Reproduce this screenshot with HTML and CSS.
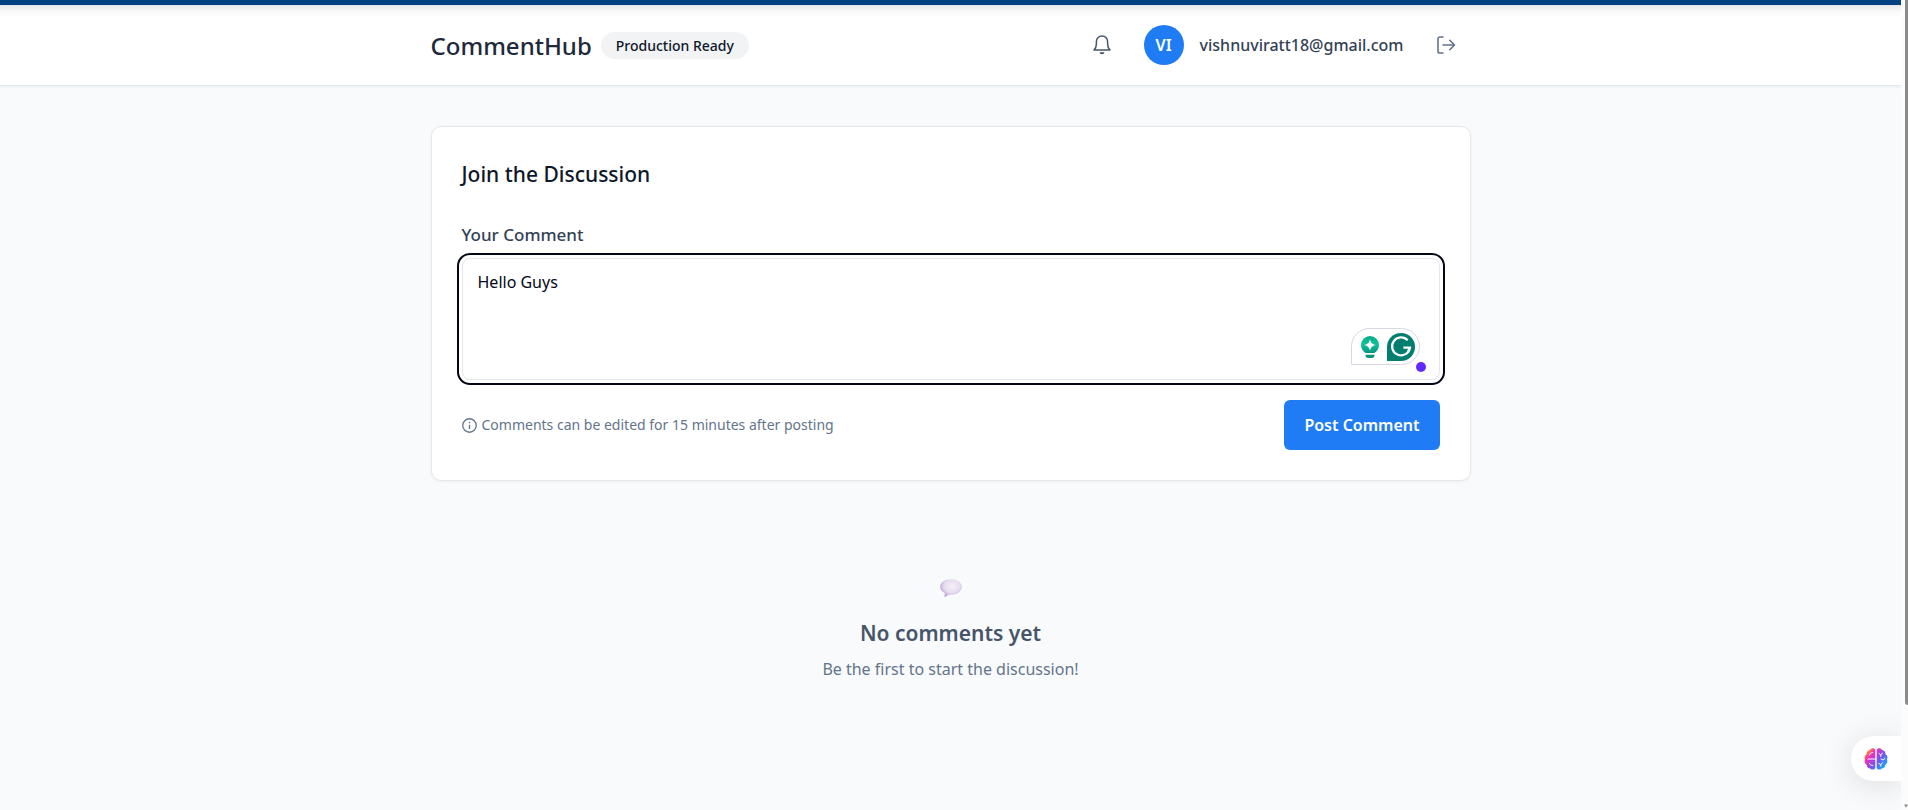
FILE: index.html
```html
<!DOCTYPE html>
<html lang="en">
<head>
<meta charset="utf-8">
<meta name="viewport" content="width=device-width, initial-scale=1">
<title>CommentHub</title>
<link rel="stylesheet" href="styles.css">
</head>
<body>
<div class="shell">
  <div class="page">
    <div class="accent-bar"></div>
    <header class="header">
      <div class="container header-row">
        <div class="brand">
          <h1 class="brand-name">CommentHub</h1>
          <span class="badge">Production Ready</span>
        </div>
        <div class="account">
          <button class="icon-button" type="button" aria-label="Notifications">
            <svg class="icon-bell" viewBox="0 0 20 22" fill="none" stroke="currentColor" stroke-width="1.5" stroke-linejoin="round">
              <path d="M2 15.900h16c-1.700-1.800-2.400-3.600-2.400-6V7.500C15.600 4.400 13.100 2 10 2S4.400 4.400 4.400 7.500v2.400c0 2.400-.7 4.200-2.400 6z"/>
              <path d="M7.500 18.200h5a2.500 2 0 0 1-5 0z" fill="currentColor" stroke="none"/>
            </svg>
          </button>
          <div class="user">
            <span class="avatar">VI</span>
            <span class="email">vishnuviratt18@gmail.com</span>
          </div>
          <button class="icon-button logout" type="button" aria-label="Log out">
            <svg class="icon-logout" viewBox="0 0 20 20" fill="none" stroke="currentColor" stroke-width="1.600" stroke-linecap="round" stroke-linejoin="round">
              <path d="M7 2H3.800A1.800 1.800 0 0 0 2 3.800v12.400A1.800 1.800 0 0 0 3.800 18H7M7 10h11.500M13.800 5.300l4.700 4.700-4.700 4.700"/>
            </svg>
          </button>
        </div>
      </div>
    </header>

    <main class="container main">
      <form class="card">
        <h2 class="card-title">Join the Discussion</h2>
        <label class="label" for="comment">Your Comment</label>
        <div class="field">
          <textarea class="textarea" id="comment">Hello Guys</textarea>
          <div class="assistant">
            <svg class="bulb" viewBox="0 0 20 24">
              <defs><linearGradient id="bulb-fill" x1="0" y1="0" x2="0" y2="1"><stop offset="0" stop-color="#08a889"/><stop offset=".5" stop-color="#10c39c"/><stop offset="1" stop-color="#07937c"/></linearGradient></defs>
              <path d="M10 1a9 9 0 0 0-9 9c0 3.600 2 6.300 4.600 8h8.800C17 16.300 19 13.600 19 10a9 9 0 0 0-9-9z" fill="url(#bulb-fill)"/>
              <path d="M5.500 19.700h9v.8c0 1.600-1.100 2.500-2.600 2.500H8.100c-1.500 0-2.600-.9-2.600-2.500z" fill="#07937c"/>
              <path d="M10 4.200c.9 3.600 2.200 4.900 5.800 5.800-3.600.9-4.900 2.200-5.800 5.800-.9-3.600-2.200-4.900-5.800-5.800 3.600-.9 4.900-2.200 5.800-5.800z" fill="#fff"/>
            </svg>
            <svg class="checker" viewBox="0 0 28 28">
              <path d="M14 0a14 14 0 0 1 0 28H0V14A14 14 0 0 1 14 0z" fill="#027e6f"/>
              <path d="M20.700 7.300A9 9 0 1 0 23 14.600h-6.600M22.900 14.500l-2.200 4.600" fill="none" stroke="#fff" stroke-width="2.200"/>
            </svg>
            <span class="status-dot"></span>
          </div>
        </div>
        <div class="actions">
          <p class="hint">
            <svg class="icon-info" viewBox="0 0 14 14" fill="none" stroke="currentColor" stroke-width="1.200">
              <circle cx="7" cy="7" r="6.300"/>
              <path d="M7 6.200v4M7 3.600v1.400"/>
            </svg>
            Comments can be edited for 15 minutes after posting
          </p>
          <button class="submit" type="submit">Post Comment</button>
        </div>
      </form>

      <section class="empty">
        <svg class="bubble" viewBox="0 0 22 18">
          <defs><radialGradient id="bubble-fill" cx=".55" cy=".4" r=".62"><stop offset="0" stop-color="#f5f0f8"/><stop offset=".6" stop-color="#e6dcef"/><stop offset="1" stop-color="#b59bd4"/></radialGradient></defs>
          <path d="M11 .3c6 0 10.800 3.300 10.800 7.700S17 15.700 11 15.700c-.9 0-1.800-.1-2.600-.2-1 1.300-2.300 2.100-4.200 2.200.6-1.100.8-2.300.4-3.700C1.900 12.600.2 10.500.2 8 .2 3.600 5 .3 11 .3z" fill="url(#bubble-fill)"/>
        </svg>
        <h3 class="empty-title">No comments yet</h3>
        <p class="empty-text">Be the first to start the discussion!</p>
      </section>
    </main>

    <button class="side-tab" type="button" aria-label="Open assistant">
      <svg class="brain" viewBox="0 0 24 24">
        <defs><linearGradient id="brain-fill" gradientUnits="userSpaceOnUse" x1="3" y1="3" x2="21" y2="19"><stop offset="0" stop-color="#ffa400"/><stop offset=".25" stop-color="#f32fb8"/><stop offset=".6" stop-color="#7c4df5"/><stop offset="1" stop-color="#18a5f8"/></linearGradient></defs>
        <path fill="url(#brain-fill)" d="M11.300 3v18c-.8 1.700-3.500 2.300-5 .4-2 0-3.600-1.400-3.400-3.500C.8 16.800.1 14.600 1 12.600c-1-2-.4-4.200 1.500-5.300C2.300 5 4 3.200 6 3c1.300-2.300 4.500-2.100 5.300 0zM12.700 3v18c.8 1.700 3.500 2.300 5 .4 2 0 3.600-1.400 3.400-3.500 2.100-1.100 2.800-3.300 1.900-5.300 1-2 .4-4.200-1.500-5.300C21.700 5 20 3.200 18 3c-1.300-2.300-4.500-2.100-5.300 0z"/>
        <path fill="none" stroke="#fff" stroke-width="1" stroke-linecap="round" d="M4 12h7.300M5.500 8c.3-1.800 1.500-2.500 3.300-2.400M5.500 16.500c.5 1.400 1.500 2 3.300 1.900M15 6.500l1.800 1.500 1.600-2M16.800 8v1.500M17 12l2 1 2-1.500M14.800 16.500l2 1.200 1.700-2M16.800 17.700v1.500"/>
      </svg>
    </button>
  </div>
  <div class="scroll-track">
    <div class="scroll-thumb"></div>
    <svg class="scroll-arrow" viewBox="0 0 6 6"><path d="M0 0h6L3 5z" fill="#8b8b8b"/></svg>
  </div>
</div>
</body>
</html>
```
FILE: styles.css
```css
* {
  box-sizing: border-box;
}

body {
  margin: 0;
  font-family: "Noto Sans", "Open Sans", sans-serif;
  font-size: 16px;
  color: #1e293b;
  background: #f8fafc;
}

h1, h2, h3, p {
  margin: 0;
}

button, textarea {
  font: inherit;
}

.shell {
  display: flex;
  min-height: 100vh;
}

.page {
  position: relative;
  flex: 1;
  min-width: 0;
}

.accent-bar {
  height: 5px;
  background: #004182;
}

.header {
  background: linear-gradient(#e6e6e7, #f8f8f8 6px, #fff 12px);
  border-bottom: 1px solid #e2e8f0;
  box-shadow: 0 1px 3px rgba(0, 0, 0, 0.06);
}

.container {
  width: 100%;
  max-width: 1040px;
  margin: 0 auto;
}

.header-row {
  display: flex;
  align-items: center;
  justify-content: space-between;
  height: 80px;
}

.brand {
  display: flex;
  align-items: center;
  gap: 9px;
}

.brand-name {
  padding-top: 2px;
  font-size: 24px;
  line-height: 32px;
  font-weight: 500;
}

.badge {
  padding: 2px 15px;
  border-radius: 14px;
  background: #f1f3f5;
  color: #0f172a;
  font-size: 14px;
  line-height: 23px;
  font-weight: 500;
}

.account {
  display: flex;
  align-items: center;
  gap: 22px;
  padding-right: 5px;
}

.icon-button {
  display: grid;
  place-items: center;
  width: 40px;
  height: 40px;
  padding: 0;
  border: 0;
  background: none;
  color: #475569;
}

.logout {
  color: #64748b;
}

.icon-bell {
  width: 20px;
  height: 22px;
}

.icon-logout {
  width: 20px;
  height: 20px;
}

.user {
  display: flex;
  align-items: center;
  gap: 16px;
}

.avatar {
  display: grid;
  place-items: center;
  width: 40px;
  height: 40px;
  border-radius: 50%;
  background: #1f7cf5;
  color: #fff;
  font-size: 16px;
  font-weight: 600;
}

.email {
  color: #334155;
  font-size: 16px;
  font-weight: 500;
}

.main {
  padding: 40px 0;
}

.card {
  padding: 30px;
  border: 1px solid #e5e7eb;
  border-radius: 10px;
  background: #fff;
  box-shadow: 0 1px 3px rgba(0, 0, 0, 0.05);
}

.card-title {
  margin-bottom: 28px;
  color: #0f172a;
  font-size: 21px;
  line-height: 35px;
  font-weight: 500;
}

.label {
  display: block;
  margin-bottom: 8px;
  color: #334155;
  font-size: 17px;
  line-height: 30px;
  font-weight: 500;
}

.field {
  position: relative;
}

.textarea {
  display: block;
  width: 100%;
  height: 122px;
  padding: 8px 15px;
  border: 1px solid #e5e7eb;
  border-radius: 8px;
  outline: 2px solid #020617;
  outline-offset: 3px;
  background: #fff;
  color: #020617;
  font-size: 16px;
  line-height: 30px;
  resize: none;
}

.assistant {
  position: absolute;
  right: 20px;
  bottom: 15px;
  display: flex;
  align-items: center;
  justify-content: space-between;
  width: 69px;
  height: 37px;
  padding: 0 4px 0 8px;
  border: 1px solid #d5d7e5;
  border-radius: 19px 19px 19px 0;
  background: #fff;
}

.bulb {
  width: 20px;
  height: 24px;
}

.checker {
  width: 28px;
  height: 28px;
}

.status-dot {
  position: absolute;
  right: -7px;
  bottom: -8px;
  width: 10px;
  height: 10px;
  border-radius: 50%;
  background: #6429ff;
}

.actions {
  display: flex;
  align-items: center;
  justify-content: space-between;
  margin-top: 20px;
}

.hint {
  display: flex;
  align-items: center;
  gap: 5px;
  color: #64748b;
  font-size: 14px;
  line-height: 20px;
}

.icon-info {
  width: 15px;
  height: 15px;
}

.submit {
  padding: 10px 20px;
  border: 0;
  border-radius: 6px;
  background: #1f7cf5;
  color: #fff;
  font-size: 16px;
  line-height: 30px;
  font-weight: 600;
}

.empty {
  display: flex;
  flex-direction: column;
  align-items: center;
  padding: 98px 0 60px;
  text-align: center;
}

.bubble {
  width: 22px;
  height: 18px;
}

.empty-title {
  margin-top: 18px;
  color: #475569;
  font-size: 21px;
  line-height: 36px;
  font-weight: 600;
}

.empty-text {
  margin-top: 3px;
  color: #64748b;
  font-size: 16px;
  line-height: 30px;
}

.side-tab {
  position: fixed;
  right: 7px;
  bottom: 29px;
  display: flex;
  align-items: center;
  width: 50px;
  height: 45px;
  padding: 0 0 0 13px;
  border: 0;
  border-radius: 23px 0 0 23px;
  background: #fff;
  box-shadow: 0 4px 30px rgba(0, 0, 0, 0.12);
  clip-path: inset(-60px 0 -60px -60px);
}

.brain {
  width: 24px;
  height: 24px;
}

.scroll-track {
  position: sticky;
  top: 0;
  display: flex;
  flex-direction: column;
  align-items: flex-end;
  justify-content: space-between;
  width: 7px;
  height: 100vh;
  background: #fcfcfc;
}

.scroll-thumb {
  width: 3px;
  height: 87%;
  border-radius: 0 0 0 3px;
  background: #8b8b8b;
}

.scroll-arrow {
  width: 4px;
  height: 7px;
}
```
